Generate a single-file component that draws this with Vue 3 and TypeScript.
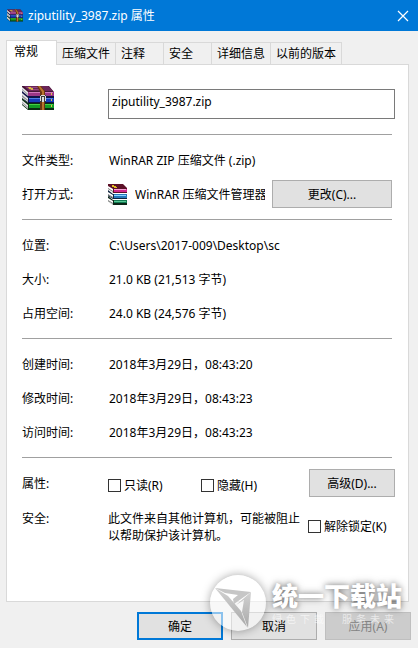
<script setup lang="ts">
import { ref } from 'vue'

interface Field {
  label: string
  value: string
}

const fileName = ref<string>('ziputility_3987.zip')
const tabs: string[] = ['常规', '压缩文件', '注释', '安全', '详细信息', '以前的版本']
const activeTab = ref<string>('常规')

const storage: Field[] = [
  { label: '位置:', value: 'C:\\Users\\2017-009\\Desktop\\sc' },
  { label: '大小:', value: '21.0 KB (21,513 字节)' },
  { label: '占用空间:', value: '24.0 KB (24,576 字节)' },
]

const times: Field[] = [
  { label: '创建时间:', value: '2018年3月29日，08:43:20' },
  { label: '修改时间:', value: '2018年3月29日，08:43:23' },
  { label: '访问时间:', value: '2018年3月29日，08:43:23' },
]

const readOnly = ref<boolean>(false)
const hidden = ref<boolean>(false)
const unblock = ref<boolean>(false)

const slogan: string[] = Array.from('绿色下载 服务未来')
</script>

<template>
  <div class="dialog">
    <svg class="defs" aria-hidden="true">
      <symbol id="archive" viewBox="0 0 32 24">
        <path d="M0 0h27l5 6v4H6L0 4z" fill="#451536" />
        <path d="M2 0h24l5 5H7z" fill="#6b2558" />
        <path d="M4 1h13l1 1H5zM7 3h12l1 1H8z" fill="#94497e" />
        <path d="M6 1h3v1h2v2H9V3H7z" fill="#d9b63c" />
        <path d="M6 6h26v4H6z" fill="#9c3787" />
        <path d="M7 6h24v1H7z" fill="#cf78bb" />
        <path d="M0 1l6 5v4L0 5z" fill="#e8e8e8" />
        <path d="M0 3l6 5v1L0 4z" fill="#8f8f96" />
        <path d="M0 5l6 5h26v7H6l-6-5z" fill="#101348" />
        <path d="M7 12h25v4H7z" fill="#173aba" />
        <path d="M7 12h24v1H7z" fill="#4c7de6" />
        <path d="M0 7l6 5v4l-6-4z" fill="#e8e8e8" />
        <path d="M0 9l6 5v1l-6-4z" fill="#8f8f96" />
        <path d="M0 12l6 5h26v7H6l-6-5z" fill="#092c12" />
        <path d="M7 18h25v4H7z" fill="#129a24" />
        <path d="M7 18h24v1H7z" fill="#45cf45" />
        <path d="M0 14l6 5v4l-6-5z" fill="#e8e8e8" />
        <path d="M0 16l6 5v1l-6-5z" fill="#8f8f96" />
        <path d="M15 0h4l4 5v19h-5V6z" fill="#6b3511" />
        <path d="M16 0h2l4 5v19h-2V6z" fill="#b8742c" />
        <path d="M18 9h6v7h-6z" fill="#3b3b3b" />
        <path d="M19 9h4v1h-4zM18 10h1v5h-1zM23 10h1v5h-1zM20 11h2v5h-2z" fill="#dcdcdc" />
        <path d="M29 7h1v2h-1zM29 13h1v2h-1zM29 19h1v2h-1z" fill="#e0c147" />
      </symbol>
      <symbol id="books" viewBox="0 0 19 21">
        <path d="M0 0h15l4 4v5H5L0 5z" fill="#5c1128" />
        <path d="M4 1h2v1h2v1h1v1H6V3H4z" fill="#e1bd22" />
        <path d="M6 5h13v3H6z" fill="#cf278b" />
        <path d="M6 5h12v1H6z" fill="#f6a1d4" />
        <path d="M0 2l5 3v4L0 6z" fill="#fff" />
        <path d="M0 4l5 3v1L0 5z" fill="#777" />
        <path d="M0 6l5 4h14v5H5l-5-3z" fill="#10243f" />
        <path d="M6 10h13v4H6z" fill="#2578bc" />
        <path d="M6 11h12v1H6z" fill="#8bd4ff" />
        <path d="M0 8l5 3v3l-5-3z" fill="#fff" />
        <path d="M0 10l5 3v1l-5-3z" fill="#777" />
        <path d="M0 12l5 4h14v5H5l-5-4z" fill="#0b2517" />
        <path d="M6 16h13v3H6z" fill="#137c53" />
        <path d="M6 17h12v1H6z" fill="#58c795" />
        <path d="M0 14l5 3v4l-5-4z" fill="#fff" />
        <path d="M0 16l5 3v1l-5-3z" fill="#777" />
      </symbol>
    </svg>

    <header class="titlebar">
      <svg class="title-icon"><use href="#archive" /></svg>
      <h1>{{ fileName }} 属性</h1>
      <button class="close" type="button" aria-label="关闭">
        <svg viewBox="0 0 10 10"><path d="M0 0l10 10M10 0L0 10" /></svg>
      </button>
    </header>

    <nav class="tabs" role="tablist">
      <button
        v-for="tab in tabs"
        :key="tab"
        type="button"
        role="tab"
        class="tab"
        :class="{ active: tab === activeTab }"
        :aria-selected="tab === activeTab"
        @click="activeTab = tab"
      >{{ tab }}</button>
    </nav>

    <main class="panel">
      <div class="name-row">
        <svg class="file-icon"><use href="#archive" /></svg>
        <input v-model="fileName" class="name" type="text" aria-label="文件名" />
      </div>

      <section class="group">
        <div class="row">
          <span class="label">文件类型:</span>
          <span>WinRAR ZIP 压缩文件 (.zip)</span>
        </div>
        <div class="row">
          <span class="label narrow">打开方式:</span>
          <svg class="app-icon"><use href="#books" /></svg>
          <span class="app-name">WinRAR 压缩文件管理器</span>
          <button class="button change" type="button">更改(C)...</button>
        </div>
      </section>

      <section class="group">
        <div v-for="item in storage" :key="item.label" class="row">
          <span class="label">{{ item.label }}</span>
          <span>{{ item.value }}</span>
        </div>
      </section>

      <section class="group">
        <div v-for="item in times" :key="item.label" class="row">
          <span class="label">{{ item.label }}</span>
          <span>{{ item.value }}</span>
        </div>
      </section>

      <section class="group last">
        <div class="row">
          <span class="label narrow">属性:</span>
          <div class="checks">
            <label class="check"><input v-model="readOnly" type="checkbox" />只读(R)</label>
            <label class="check"><input v-model="hidden" type="checkbox" />隐藏(H)</label>
          </div>
          <button class="button" type="button">高级(D)...</button>
        </div>
        <div class="row security">
          <span class="label narrow">安全:</span>
          <p class="notice">此文件来自其他计算机，可能被阻止以帮助保护该计算机。</p>
          <label class="check"><input v-model="unblock" type="checkbox" />解除锁定(K)</label>
        </div>
      </section>
    </main>

    <footer class="footer">
      <button class="button primary" type="button">确定</button>
      <button class="button" type="button">取消</button>
      <button class="button" type="button" disabled>应用(A)</button>
      <div class="watermark">
        <svg class="mark" viewBox="0 0 56 56">
          <defs>
            <linearGradient id="fold" x1="0" y1="0" x2="0" y2="1">
              <stop offset="0" stop-color="#d2d2d2" />
              <stop offset="1" stop-color="#a8a8a8" />
            </linearGradient>
          </defs>
          <circle cx="28" cy="28" r="28" fill="#fff" fill-opacity=".55" />
          <path d="M5 13L41 17L24 29L23 24L28 20L15 18z" fill="#c6c6c6" />
          <path d="M5 13L18 21L31 36L37 52z" fill="url(#fold)" />
          <path d="M41 17L38 53L32 37L34 25L26 30z" fill="url(#fold)" />
        </svg>
        <div class="brand">
          <strong>统一下载站</strong>
          <div class="slogan"><span v-for="(char, i) in slogan" :key="i">{{ char }}</span></div>
        </div>
      </div>
    </footer>
  </div>
</template>

<style>
body {
  margin: 0;
  background: #f0f0f0;
}
</style>

<style scoped>
.dialog {
  display: flex;
  flex-direction: column;
  box-sizing: border-box;
  min-height: 100vh;
  background: #f0f0f0;
  color: #000;
  font: 12px/17px "Noto Sans", "Noto Sans CJK SC", sans-serif;
}

.defs {
  position: absolute;
  width: 0;
  height: 0;
}

button,
input {
  font: inherit;
  color: inherit;
  margin: 0;
}

.titlebar {
  display: flex;
  align-items: center;
  height: 31px;
  padding-left: 7px;
  background: #0078d7;
  color: #fff;
}

.title-icon {
  width: 16px;
  height: 13px;
  margin-right: 5px;
}

h1 {
  flex: 1;
  margin: 0;
  font-size: 12px;
  font-weight: 400;
}

.close {
  display: flex;
  align-items: center;
  justify-content: center;
  width: 30px;
  height: 31px;
  padding: 0;
  border: 0;
  background: none;
}

.close svg {
  width: 10px;
  height: 10px;
  overflow: visible;
  fill: none;
  stroke: #fff;
  stroke-width: 1.2;
}

.tabs {
  display: flex;
  align-items: flex-end;
  padding: 9px 9px 0 6px;
}

.tab {
  box-sizing: border-box;
  min-width: 48px;
  height: 22px;
  padding: 0 5px;
  border: 1px solid #d9d9d9;
  border-width: 1px 1px 0 0;
  background: #f0f0f0;
  line-height: 21px;
  text-align: left;
  white-space: nowrap;
}

.tab.active {
  position: relative;
  height: 25px;
  margin-bottom: -1px;
  padding: 0 12px 3px 7px;
  min-width: 51px;
  width: 51px;
  border-left-width: 1px;
  background: #fff;
}

.panel {
  flex: 1;
  margin: 0 9px 0 6px;
  padding: 24px 13px 0 15px;
  border: 1px solid #d9d9d9;
  background: #fff;
}

.name-row {
  display: flex;
  align-items: flex-start;
  gap: 54px;
  margin-bottom: 15px;
}

.file-icon {
  flex: none;
  width: 32px;
  height: 24px;
  margin-top: -3px;
}

.name {
  box-sizing: border-box;
  flex: 1;
  min-width: 0;
  height: 30px;
  padding: 0 3px 6px;
  border: 1px solid #7a7a7a;
  background: #fff;
}

.group {
  margin-right: 3px;
  padding: 8px 0;
  border-top: 1px solid #a0a0a0;
}

.group.last {
  position: relative;
  margin-right: 0;
}

.group.last::before {
  content: "";
  position: absolute;
  top: -1px;
  right: 0;
  width: 3px;
  height: 1px;
  background: #fff;
}

.row {
  display: flex;
  align-items: center;
  height: 34px;
}

.label {
  flex: none;
  width: 87px;
}

.label.narrow {
  width: 86px;
}

.app-icon {
  flex: none;
  width: 19px;
  height: 21px;
  margin-right: 8px;
}

.app-name {
  flex: 1;
  min-width: 0;
  overflow: hidden;
  white-space: nowrap;
}

.button {
  box-sizing: border-box;
  flex: none;
  width: 86px;
  height: 28px;
  padding: 0;
  border: 1px solid #adadad;
  background: #e1e1e1;
}

.button.change {
  width: 120px;
  margin-left: 7px;
}

.button.primary {
  border: 2px solid #0078d7;
}

.button:disabled {
  border-color: #bfbfbf;
  background: #ccc;
  color: #838383;
}

.checks {
  display: grid;
  flex: 1;
  grid-template-columns: 93px 1fr;
  padding-top: 4px;
}

.check {
  display: flex;
  align-items: center;
  gap: 3px;
  white-space: nowrap;
}

.check input {
  appearance: none;
  flex: none;
  box-sizing: border-box;
  width: 13px;
  height: 13px;
  border: 1px solid #333;
  background: #fff;
}

.check input:checked {
  background: #333;
}

.security {
  align-items: flex-start;
  height: auto;
  padding-top: 10px;
}

.notice {
  flex: none;
  width: 192px;
  margin: 0 8px 0 0;
}

.security .check {
  padding-top: 8px;
}

.footer {
  position: relative;
  display: flex;
  justify-content: flex-end;
  gap: 8px;
  padding: 10px 7px 8px;
}

.watermark {
  position: absolute;
  right: 16px;
  bottom: 17px;
  display: flex;
  align-items: center;
  gap: 6px;
  color: #fff;
  pointer-events: none;
}

.mark {
  width: 56px;
  height: 56px;
  border-radius: 50%;
  box-shadow: 0 0 10px rgba(0, 0, 0, 0.35);
}

.brand {
  display: flex;
  flex-direction: column;
}

.brand strong {
  font-size: 26px;
  font-weight: 900;
  line-height: 32px;
  white-space: nowrap;
  text-shadow: 0 0 8px rgba(0, 0, 0, 0.4), 0 0 5px rgba(0, 0, 0, 0.3);
}

.slogan {
  display: flex;
  gap: 4px;
  font-size: 10px;
  line-height: 14px;
  opacity: 0.6;
}

.slogan span {
  width: 10px;
}
</style>
